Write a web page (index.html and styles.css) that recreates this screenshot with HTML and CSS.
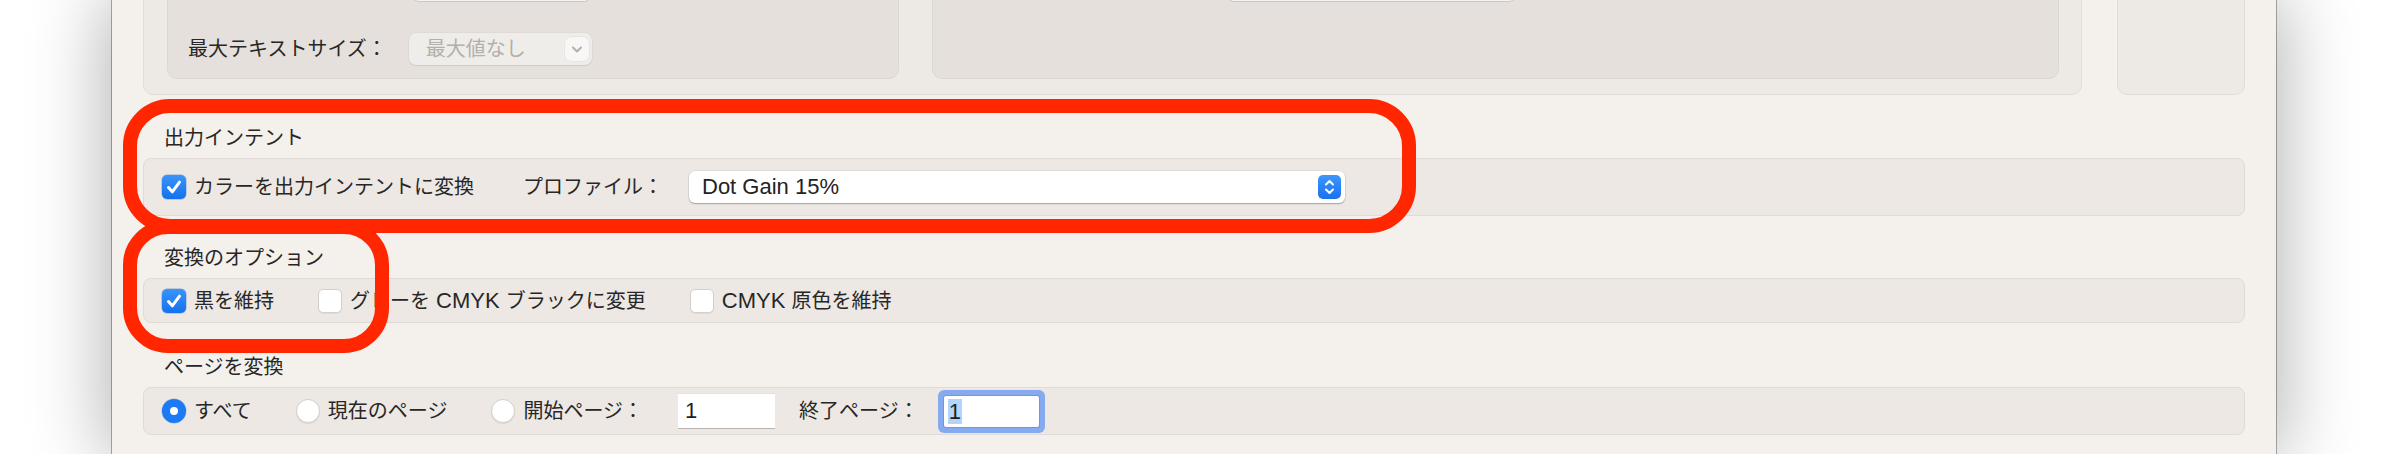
FILE: index.html
```html
<!DOCTYPE html>
<html lang="ja">
<head>
<meta charset="utf-8">
<title>出力インテント</title>
<link rel="stylesheet" href="styles.css">
</head>
<body>
<div class="window">
  <div class="top">
    <div class="group">
      <div class="pane pane-a">
        <div class="stub stub-a"></div>
        <div class="field-row">
          <span class="label">最大テキストサイズ：</span>
          <div class="popup popup-disabled">
            <span>最大値なし</span>
            <span class="popup-btn"><svg width="24" height="24" viewBox="0 0 24 24"><path d="M8 10.5 L12 14.5 L16 10.5" fill="none" stroke="#b2aeaa" stroke-width="2" stroke-linecap="round" stroke-linejoin="round"/></svg></span>
          </div>
        </div>
      </div>
      <div class="pane pane-b">
        <div class="stub stub-b"></div>
      </div>
    </div>
    <div class="side-box"></div>
  </div>

  <section class="section s1">
    <h3 class="title">出力インテント</h3>
    <div class="row row-intent">
      <div class="check">
        <span class="box checked"><svg width="24" height="24" viewBox="0 0 24 24"><path d="M6.5 12.5 L10.3 16.8 L17.5 7.2" fill="none" stroke="#fff" stroke-width="3" stroke-linecap="round" stroke-linejoin="round"/></svg></span>
        <span>カラーを出力インテントに変換</span>
      </div>
      <span class="label profile-label">プロファイル：</span>
      <div class="popup popup-profile">
        <span class="latin">Dot Gain 15%</span>
        <span class="stepper"><svg width="23" height="24" viewBox="0 0 23 24"><path d="M8 9.5 L11.5 6 L15 9.5 M8 14.5 L11.5 18 L15 14.5" fill="none" stroke="#fff" stroke-width="2" stroke-linecap="round" stroke-linejoin="round"/></svg></span>
      </div>
    </div>
  </section>

  <section class="section s2">
    <h3 class="title">変換のオプション</h3>
    <div class="row row-options">
      <div class="check">
        <span class="box checked"><svg width="24" height="24" viewBox="0 0 24 24"><path d="M6.5 12.5 L10.3 16.8 L17.5 7.2" fill="none" stroke="#fff" stroke-width="3" stroke-linecap="round" stroke-linejoin="round"/></svg></span>
        <span>黒を維持</span>
      </div>
      <div class="check item">
        <span class="box"></span>
        <span>グレーを<span class="latin"> CMYK </span>ブラックに変更</span>
      </div>
      <div class="check item">
        <span class="box"></span>
        <span><span class="latin">CMYK </span>原色を維持</span>
      </div>
    </div>
  </section>

  <section class="section s3">
    <h3 class="title">ページを変換</h3>
    <div class="row row-pages">
      <div class="check">
        <span class="radio selected"></span>
        <span>すべて</span>
      </div>
      <div class="check radio-item">
        <span class="radio"></span>
        <span>現在のページ</span>
      </div>
      <div class="check radio-item">
        <span class="radio"></span>
        <span>開始ページ：</span>
      </div>
      <div class="input input-start"><span class="latin">1</span></div>
      <span class="label end-label">終了ページ：</span>
      <div class="input input-end"><span class="latin sel">1</span></div>
    </div>
  </section>

  <div class="markup markup-1"></div>
  <div class="markup markup-2"></div>
</div>
</body>
</html>
```

FILE: styles.css
```css
html, body {
  margin: 0;
  height: 454px;
  overflow: hidden;
  background: #ffffff;
}

.window {
  position: relative;
  margin-left: 112px;
  width: 2164px;
  height: 454px;
  box-sizing: border-box;
  padding: 0 31px;
  background: #f4f0eb;
  overflow: hidden;
  box-shadow: 0 0 0 1px rgba(0, 0, 0, 0.3), 0 0 70px 6px rgba(0, 0, 0, 0.3);
  font-family: "Liberation Sans", "Noto Sans CJK JP", sans-serif;
  font-size: 20px;
  line-height: 24px;
  color: #272727;
}

.latin {
  font-size: 22px;
}

/* ---------- top (cut off) area ---------- */
.top {
  display: flex;
  gap: 35px;
  margin-top: -60px;
  height: 155px;
}

.group {
  width: 1939px;
  box-sizing: border-box;
  display: flex;
  gap: 33px;
  padding: 0 22px 15px 23px;
  background: #ede9e4;
  border: 1px solid #e2ddd8;
  border-radius: 10px;
}

.pane {
  box-sizing: border-box;
  display: flex;
  flex-direction: column;
  justify-content: flex-end;
  background: #e5e0dc;
  border: 1px solid #dcd7d2;
  border-radius: 10px;
}

.pane-a {
  width: 732px;
  padding: 0 0 13px 20px;
}

.pane-b {
  flex: 1;
}

.stub {
  height: 10px;
  background: #f6f4f2;
  border-radius: 0 0 6px 6px;
  box-shadow: 0 1px 0 #cbc7c3;
}

.stub-a {
  width: 177px;
  margin: 0 0 32px 225px;
}

.stub-b {
  width: 287px;
  margin: 0 0 77px 295px;
}

.side-box {
  width: 128px;
  box-sizing: border-box;
  background: #ede9e4;
  border: 1px solid #e2ddd8;
  border-radius: 10px;
}

.field-row {
  display: flex;
  align-items: center;
  gap: 22px;
  height: 32px;
}

.label {
  white-space: nowrap;
}

.popup {
  box-sizing: border-box;
  height: 32px;
  display: flex;
  align-items: center;
  justify-content: space-between;
  border-radius: 7px;
}

.popup-disabled {
  width: 183px;
  padding: 0 3px 0 17px;
  background: #efedea;
  color: #b3afab;
  box-shadow: 0 1px 1px rgba(0, 0, 0, 0.08), 0 0 0 0.5px rgba(0, 0, 0, 0.05);
}

.popup-btn {
  width: 24px;
  height: 24px;
  display: flex;
  background: #f8f7f5;
  border-radius: 6px;
  box-shadow: 0 0 0 0.5px rgba(0, 0, 0, 0.06);
}

/* ---------- sections ---------- */
.section {
  margin: 0;
}

.s1 { margin-top: 31px; }
.s2 { margin-top: 30px; }
.s3 { margin-top: 32px; }

.title {
  margin: 0;
  padding-left: 21px;
  font-size: 20px;
  line-height: 24px;
  font-weight: normal;
  color: #272727;
}

.row {
  box-sizing: border-box;
  margin-top: 8px;
  display: flex;
  align-items: center;
  padding-left: 18px;
  background: #ede8e3;
  border: 1px solid #e0dbd6;
  border-radius: 8px;
}

.row-intent { height: 58px; }
.row-options { height: 45px; }
.row-pages { height: 48px; }

.check {
  display: flex;
  align-items: center;
  gap: 8px;
  white-space: nowrap;
}

.check.item { margin-left: 44px; }
.check.radio-item { margin-left: 44px; }

.box {
  width: 24px;
  height: 24px;
  box-sizing: border-box;
  border-radius: 5px;
  background: #ffffff;
  border: 1px solid #d3cfca;
  box-shadow: 0 1px 1px rgba(0, 0, 0, 0.06);
  display: flex;
}

.box.checked {
  border: none;
  background: linear-gradient(#3a94fa, #1471ee);
  box-shadow: 0 0 0 0.5px rgba(0, 80, 200, 0.4);
}

.profile-label { margin-left: 49px; }

.popup-profile {
  width: 656px;
  margin-left: 26px;
  padding: 0 4px 0 13px;
  background: #ffffff;
  border-radius: 6px;
  box-shadow: 0 1px 1.5px rgba(0, 0, 0, 0.28), 0 0 0 0.5px rgba(0, 0, 0, 0.08);
  color: #232323;
}

.stepper {
  width: 23px;
  height: 24px;
  display: flex;
  border-radius: 5px;
  background: linear-gradient(#3e96fb, #1872f0);
}

.radio {
  width: 24px;
  height: 24px;
  box-sizing: border-box;
  border-radius: 50%;
  background: #ffffff;
  border: 1px solid #d3cfca;
  box-shadow: 0 1px 1px rgba(0, 0, 0, 0.08);
}

.radio.selected {
  border: 8px solid #1c7bf4;
  background: #ffffff;
  box-shadow: 0 0 0 0.5px rgba(0, 80, 200, 0.3);
}

.input {
  box-sizing: border-box;
  display: flex;
  align-items: center;
  background: #ffffff;
  color: #1f1f1f;
}

.input-start {
  width: 97px;
  height: 34px;
  margin-left: 35px;
  padding-left: 7px;
  box-shadow: 0 1px 0 #b8b4b0, 0 -0.5px 0 #dcd8d4;
}

.end-label { margin-left: 24px; }

.input-end {
  width: 95px;
  height: 31px;
  margin-left: 25px;
  padding-left: 4px;
  border-radius: 2px;
  box-shadow: 0 0 0 1px #6d98ea, 0 0 0 6px #86aaef;
}

.sel {
  background: #b3d4fb;
  line-height: 25px;
  padding: 0 1px;
}

/* ---------- markup annotations ---------- */
.markup {
  position: absolute;
  box-sizing: border-box;
  border: 14px solid #ff2600;
  pointer-events: none;
}

.markup-1 {
  left: 11px;
  top: 99px;
  width: 1293px;
  height: 134px;
  border-radius: 47px;
}

.markup-2 {
  left: 11px;
  top: 220px;
  width: 266px;
  height: 133px;
  border-radius: 45px;
}
```
